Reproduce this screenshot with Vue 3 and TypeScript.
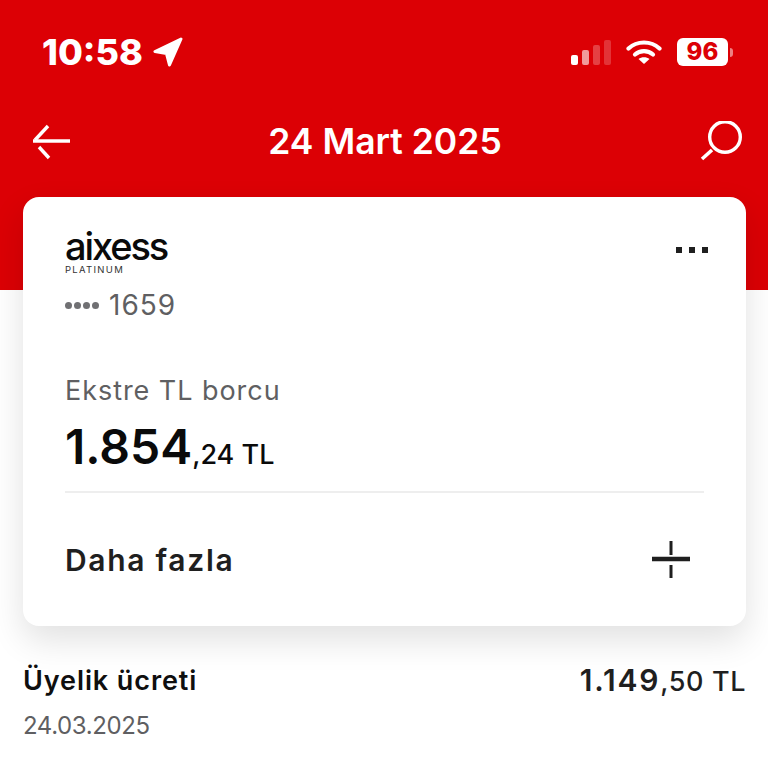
<template>
  <div class="page">
    <div class="status-bar">
      <div class="status-left">
        <span class="clock">10:58</span>
        <svg class="location" width="30" height="30" viewBox="0 0 30 30">
          <path d="M28 2 L2 14.5 L13.5 16.5 L16.5 28 Z" fill="#fff" stroke="#fff" stroke-width="3" stroke-linejoin="round" />
        </svg>
      </div>
      <div class="status-right">
        <div class="signal">
          <span class="bar b1"></span>
          <span class="bar b2"></span>
          <span class="bar b3"></span>
          <span class="bar b4"></span>
        </div>
        <svg class="wifi" width="36" height="26" viewBox="0 0 36 26" fill="none">
          <path d="M2.5 9.5 C11 1.5 25 1.5 33.5 9.5" stroke="#fff" stroke-width="4.2" stroke-linecap="round" />
          <path d="M9 15.5 C14 11 22 11 27 15.5" stroke="#fff" stroke-width="4.2" stroke-linecap="round" />
          <path d="M18 25 L12.5 20 C15.5 17.5 20.5 17.5 23.5 20 Z" fill="#fff" />
        </svg>
        <div class="battery">
          <span class="battery-body">96</span>
          <span class="battery-cap"></span>
        </div>
      </div>
    </div>

    <header class="nav">
      <svg width="40" height="36" viewBox="0 0 40 36" fill="none" stroke="#fff" stroke-width="3.4">
        <path d="M1 17 H38" />
        <path d="M16 2 L3 16" />
        <path d="M7 23 L17 34" />
      </svg>
      <h1 class="nav-title">24 Mart 2025</h1>
      <svg width="44" height="42" viewBox="0 0 44 42" fill="none" stroke="#fff">
        <circle cx="27" cy="16" r="15.3" stroke-width="3.4" />
        <path d="M14 29 L4 38" stroke-width="3.6" />
      </svg>
    </header>

    <section class="card">
      <div class="card-top">
        <div>
          <div class="logo">aixess</div>
          <div class="logo-sub">PLATINUM</div>
          <div class="card-no"><span class="dots"><i></i><i></i><i></i><i></i></span>1659</div>
        </div>
        <div class="more"><i></i><i></i><i></i></div>
      </div>
      <div class="debt-label">Ekstre TL borcu</div>
      <div class="debt-amount">1.854<small>,24 TL</small></div>
      <div class="divider"></div>
      <div class="more-row">
        <span>Daha fazla</span>
        <svg width="40" height="38" viewBox="0 0 40 38" fill="none" stroke="#1f1f1f">
          <path d="M1 18 H39" stroke-width="4.4" />
          <path d="M20 0 V14" stroke-width="3" />
          <path d="M20 24 V37" stroke-width="3" />
        </svg>
      </div>
    </section>

    <div class="tx">
      <div class="tx-row">
        <span class="tx-name">Üyelik ücreti</span>
        <span class="tx-amount">1.149<small>,50 TL</small></span>
      </div>
      <div class="tx-date">24.03.2025</div>
    </div>
  </div>
</template>

<script setup lang="ts">
</script>

<style>
html,
body {
  background: #fff;
}
</style>

<style scoped>
.page {
  height: 768px;
  overflow: hidden;
  font-family: Inter, "Liberation Sans", sans-serif;
  background: linear-gradient(#dc0005 290px, #fff 290px);
}

.status-bar {
  height: 106px;
  padding: 30px 35px 0 42px;
  box-sizing: border-box;
  display: flex;
  justify-content: space-between;
  align-items: flex-start;
}
.status-left {
  display: flex;
  align-items: center;
  gap: 10px;
  color: #fff;
}
.clock {
  font-size: 36px;
  line-height: 44px;
  font-weight: 800;
}
.status-right {
  display: flex;
  align-items: center;
  gap: 15px;
  height: 44px;
}
.signal {
  display: flex;
  align-items: flex-end;
  gap: 4px;
  height: 26px;
}
.bar {
  width: 7px;
  background: #fff;
  border-radius: 2px;
}
.b1 {
  height: 10px;
}
.b2 {
  height: 15px;
  opacity: 0.6;
}
.b3 {
  height: 20px;
  opacity: 0.25;
}
.b4 {
  height: 25px;
  opacity: 0.2;
}
.battery {
  display: flex;
  align-items: center;
  gap: 2px;
}
.battery-body {
  width: 51px;
  height: 28px;
  background: #fff;
  border-radius: 6px;
  color: #dc0005;
  font-size: 24px;
  font-weight: 800;
  line-height: 28px;
  text-align: center;
}
.battery-cap {
  width: 3px;
  height: 9px;
  background: rgba(255, 255, 255, 0.5);
  border-radius: 0 3px 3px 0;
}

.nav {
  height: 91px;
  padding: 0 26px 20px 32px;
  box-sizing: border-box;
  display: flex;
  justify-content: space-between;
  align-items: center;
}
.nav-title {
  margin: 0;
  color: #fff;
  font-size: 35.5px;
  font-weight: 600;
}

.card {
  margin: 0 22px 0 23px;
  height: 429px;
  box-sizing: border-box;
  padding: 36px 42px 0;
  background: #fff;
  border-radius: 16px;
  box-shadow: 0 14px 34px rgba(0, 0, 0, 0.12);
  display: flex;
  flex-direction: column;
}
.card-top {
  display: flex;
  justify-content: space-between;
}
.logo {
  margin-top: -2px;
  font-size: 38px;
  line-height: 30px;
  font-weight: 500;
  letter-spacing: -2.1px;
  color: #0a0a0a;
}
.logo-sub {
  margin-top: 3px;
  font-size: 9.5px;
  line-height: 12px;
  letter-spacing: 1.3px;
  color: #333;
}
.card-no {
  margin-top: 12px;
  display: flex;
  align-items: center;
  gap: 10px;
  font-size: 28px;
  line-height: 34px;
  letter-spacing: 1px;
  color: #5f5f62;
}
.dots {
  display: flex;
  gap: 2px;
}
.dots i {
  width: 7px;
  height: 7px;
  border-radius: 50%;
  background: #707073;
}
.more {
  display: flex;
  gap: 7px;
  padding-top: 14px;
  margin-right: -4px;
  height: 6px;
}
.more i {
  width: 6px;
  height: 6px;
  background: #1f1f1f;
}

.debt-label {
  margin-top: 52px;
  font-size: 27px;
  line-height: 34px;
  letter-spacing: 0.95px;
  color: #5f5f62;
}
.debt-amount {
  margin-top: 11px;
  font-size: 48px;
  line-height: 56px;
  font-weight: 600;
  color: #0a0a0a;
}
.debt-amount small {
  font-size: 27px;
  font-weight: 500;
}
.divider {
  margin-top: 8px;
  height: 2px;
  background: #eeeeee;
}
.more-row {
  margin-top: 48px;
  display: flex;
  justify-content: space-between;
  align-items: center;
  padding-right: 13px;
  font-size: 30px;
  font-weight: 600;
  letter-spacing: 1.7px;
  color: #1f1f1f;
}

.tx {
  padding: 36px 22px 0 23px;
}
.tx-row {
  display: flex;
  justify-content: space-between;
  align-items: center;
  color: #1f1f1f;
}
.tx-name {
  font-size: 27px;
  line-height: 36px;
  font-weight: 600;
  letter-spacing: 0.9px;
  color: #0f0f0f;
}
.tx-amount {
  font-size: 30px;
  line-height: 36px;
  font-weight: 600;
  letter-spacing: 1.8px;
}
.tx-amount small {
  font-size: 27px;
  font-weight: 500;
  letter-spacing: 0.6px;
}
.tx-date {
  margin-top: 10px;
  font-size: 24px;
  line-height: 32px;
  letter-spacing: -0.4px;
  color: #5f5f62;
}
</style>
